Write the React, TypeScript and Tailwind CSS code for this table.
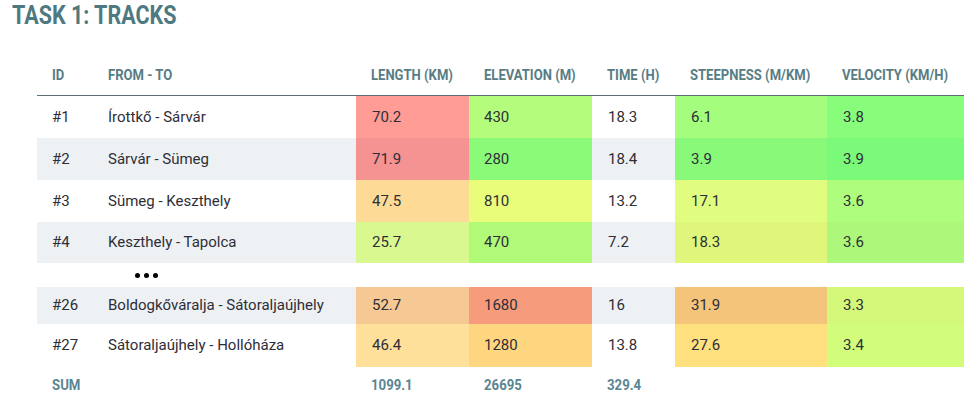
const cols = "grid grid-cols-[56px_263px_113px_123px_83px_152px_137px]";

type Row = {
  id: string;
  route: string;
  length: string;
  elevation: string;
  time: string;
  steepness: string;
  velocity: string;
  colors: [string, string, string, string];
  zebra: boolean;
  h: string;
};

const rows: Row[] = [
  { id: "#1", route: "Írottkő - Sárvár", length: "70.2", elevation: "430", time: "18.3", steepness: "6.1", velocity: "3.8", colors: ["bg-[#fe9c95]", "bg-[#b4fd7c]", "bg-[#a5fd7d]", "bg-[#88fd7c]"], zebra: false, h: "h-[42px]" },
  { id: "#2", route: "Sárvár - Sümeg", length: "71.9", elevation: "280", time: "18.4", steepness: "3.9", velocity: "3.9", colors: ["bg-[#f59292]", "bg-[#8bfa79]", "bg-[#89f97a]", "bg-[#7bfa79]"], zebra: true, h: "h-[42px]" },
  { id: "#3", route: "Sümeg - Keszthely", length: "47.5", elevation: "810", time: "13.2", steepness: "17.1", velocity: "3.6", colors: ["bg-[#fddb96]", "bg-[#eafd7b]", "bg-[#e1fd7f]", "bg-[#aefd7d]"], zebra: false, h: "h-[42px]" },
  { id: "#4", route: "Keszthely - Tapolca", length: "25.7", elevation: "470", time: "7.2", steepness: "18.3", velocity: "3.6", colors: ["bg-[#d9f890]", "bg-[#b1fa78]", "bg-[#dff67b]", "bg-[#adf87a]"], zebra: true, h: "h-[41px]" },
];

const rowsEnd: Row[] = [
  { id: "#26", route: "Boldogkőváralja - Sátoraljaújhely", length: "52.7", elevation: "1680", time: "16", steepness: "31.9", velocity: "3.3", colors: ["bg-[#f5c894]", "bg-[#f69c7c]", "bg-[#f5c47b]", "bg-[#d4f87a]"], zebra: true, h: "h-[37px]" },
  { id: "#27", route: "Sátoraljaújhely - Hollóháza", length: "46.4", elevation: "1280", time: "13.8", steepness: "27.6", velocity: "3.4", colors: ["bg-[#fee09a]", "bg-[#fed680]", "bg-[#fee07e]", "bg-[#d1fd7b]"], zebra: false, h: "h-[43px]" },
];

function Head({ children }: { children: React.ReactNode }) {
  return (
    <div className="flex items-center pl-[15px]">
      <span className="inline-block origin-left scale-x-[0.87] whitespace-nowrap text-[15px] font-bold text-[#587c84]">
        {children}
      </span>
    </div>
  );
}

function DataRow({ r }: { r: Row }) {
  const base = r.zebra ? "bg-[#edf1f4]" : "bg-white";
  const cell = "flex items-center pl-[15px]";
  return (
    <div className={`${cols} ${r.h} text-[15px] text-[#2e2e38]`}>
      <div className={`${cell} ${base}`}>{r.id}</div>
      <div className={`${cell} ${base} whitespace-nowrap`}>{r.route}</div>
      <div className={`${cell} ${r.colors[0]} pl-[16px]`}>{r.length}</div>
      <div className={`${cell} ${r.colors[1]}`}>{r.elevation}</div>
      <div className={`${cell} ${base} pl-[16px]`}>{r.time}</div>
      <div className={`${cell} ${r.colors[2]} pl-[16px]`}>{r.steepness}</div>
      <div className={`${cell} ${r.colors[3]} pl-[16px]`}>{r.velocity}</div>
    </div>
  );
}

function Sum({ children }: { children?: React.ReactNode }) {
  return (
    <div className="flex items-center pl-[15px]">
      <span className="inline-block origin-left scale-x-[0.88] text-[15px] font-bold text-[#5a8592]">
        {children}
      </span>
    </div>
  );
}

export default function App() {
  return (
    <div className="h-[406px] w-[973px] bg-white font-['Roboto',sans-serif]">
      <h1 className="pl-[12px] leading-[32px]">
        <span className="inline-block origin-left scale-x-[0.86] whitespace-nowrap text-[25px] font-bold text-[#4e7980]">
          TASK 1: TRACKS
        </span>
      </h1>

      <div className="ml-[37px] mt-[21px] w-[927px]">
        <div className={`${cols} h-[40px] border-b-[1.5px] border-[#5c6f76]`}>
          <Head>ID</Head>
          <Head>FROM - TO</Head>
          <Head>LENGTH (KM)</Head>
          <Head>ELEVATION (M)</Head>
          <Head>TIME (H)</Head>
          <Head>STEEPNESS (M/KM)</Head>
          <Head>VELOCITY (KM/H)</Head>
        </div>

        {rows.map((r) => (
          <DataRow key={r.id} r={r} />
        ))}

        <div className="flex h-[24px] items-center gap-[4px] pl-[98px]">
          <span className="h-[5px] w-[5px] rounded-full bg-black" />
          <span className="h-[5px] w-[5px] rounded-full bg-black" />
          <span className="h-[5px] w-[5px] rounded-full bg-black" />
        </div>

        {rowsEnd.map((r) => (
          <DataRow key={r.id} r={r} />
        ))}

        <div className={`${cols} h-[37px]`}>
          <Sum>SUM</Sum>
          <Sum />
          <Sum>1099.1</Sum>
          <Sum>26695</Sum>
          <Sum>329.4</Sum>
          <Sum />
          <Sum />
        </div>
      </div>
    </div>
  );
}
